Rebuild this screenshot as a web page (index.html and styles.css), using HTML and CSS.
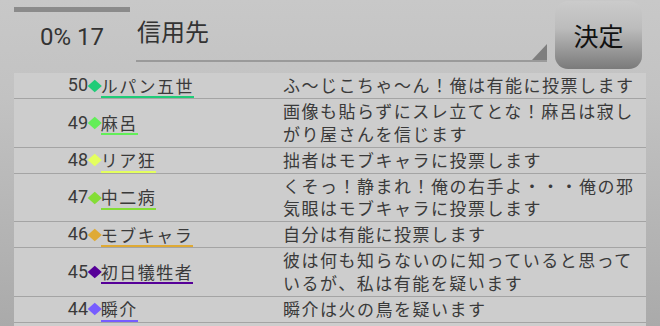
FILE: index.html
```html
<!DOCTYPE html>
<html lang="ja">
<head>
<meta charset="utf-8">
<link rel="stylesheet" href="styles.css">
</head>
<body>
<div class="screen">
  <header class="top">
    <div class="timer">
      <div class="timer-bar"></div>
      <div class="timer-text">0% 17</div>
    </div>
    <div class="spinner">
      <span class="spinner-label">信用先</span>
      <span class="spinner-arrow"></span>
    </div>
    <button class="decide">決定</button>
  </header>
  <ul class="log">
    <li class="row c-teal">
      <span class="no">50</span>
      <span class="gem"></span>
      <span class="name">ルパン五世</span>
      <p class="msg">ふ〜じこちゃ〜ん！俺は有能に投票します</p>
    </li>
    <li class="row c-green">
      <span class="no">49</span>
      <span class="gem"></span>
      <span class="name">麻呂</span>
      <p class="msg">画像も貼らずにスレ立てとな！麻呂は寂しがり屋さんを信じます</p>
    </li>
    <li class="row c-yellow">
      <span class="no">48</span>
      <span class="gem"></span>
      <span class="name">リア狂</span>
      <p class="msg">拙者はモブキャラに投票します</p>
    </li>
    <li class="row c-lime">
      <span class="no">47</span>
      <span class="gem"></span>
      <span class="name">中二病</span>
      <p class="msg">くそっ！静まれ！俺の右手よ・・・俺の邪気眼はモブキャラに投票します</p>
    </li>
    <li class="row c-gold">
      <span class="no">46</span>
      <span class="gem"></span>
      <span class="name">モブキャラ</span>
      <p class="msg">自分は有能に投票します</p>
    </li>
    <li class="row c-purple">
      <span class="no">45</span>
      <span class="gem"></span>
      <span class="name">初日犠牲者</span>
      <p class="msg">彼は何も知らないのに知っていると思っているが、私は有能を疑います</p>
    </li>
    <li class="row c-violet">
      <span class="no">44</span>
      <span class="gem"></span>
      <span class="name">瞬介</span>
      <p class="msg">瞬介は火の鳥を疑います</p>
    </li>
  </ul>
</div>
</body>
</html>
```
FILE: styles.css
```css
html, body {
  margin: 0;
  padding: 0;
}
body {
  width: 660px;
  height: 326px;
  overflow: hidden;
  background: linear-gradient(#c8c8c8, #c2c2c2 30%, #aaaaaa);
  font-family: Roboto, "Noto Sans CJK JP", sans-serif;
  color: #3a3a3a;
}
.screen {
  display: flex;
  flex-direction: column;
  height: 326px;
}
.top {
  display: flex;
  align-items: flex-start;
  height: 73px;
  flex: none;
  padding-left: 14px;
  box-sizing: border-box;
}
.timer {
  width: 116px;
  padding-top: 7px;
}
.timer-bar {
  height: 5px;
  background: #8b8b8b;
}
.timer-text {
  margin-top: 11px;
  text-align: center;
  font-family: Roboto, sans-serif;
  font-size: 24px;
  line-height: 28px;
  color: #333333;
}
.spinner {
  display: flex;
  justify-content: space-between;
  align-items: flex-end;
  width: 411px;
  height: 60px;
  margin-left: 6px;
  border-bottom: 2px solid #9a9a9a;
}
.spinner-label {
  align-self: flex-start;
  margin-top: 16px;
  padding-left: 1px;
  font-family: "Noto Sans CJK JP", sans-serif;
  font-size: 24px;
  line-height: 30px;
  color: #333333;
}
.spinner-arrow {
  width: 0;
  height: 0;
  border-left: 15px solid transparent;
  border-bottom: 16px solid #7e7e7e;
}
.decide {
  margin: 1px 0 0 8px;
  width: 87px;
  height: 68px;
  padding: 0;
  border: none;
  border-radius: 13px;
  background: linear-gradient(#cbcbcb, #bcbcbc 40%, #7a7a7a);
  font-family: "Noto Sans CJK JP", sans-serif;
  font-size: 25px;
  color: #111111;
}
.log {
  list-style: none;
  margin: 0 0 0 14px;
  padding: 0;
  width: 632px;
  flex: 1;
  background: #cdcdcd;
}
.row {
  display: flex;
  align-items: center;
  padding: 1.25px 0;
  border-bottom: 1px solid #a4a4a4;
  font-size: 17px;
  line-height: 22.5px;
}
.no {
  width: 74px;
  flex: none;
  text-align: right;
  font-size: 18px;
}
.gem {
  width: 9.5px;
  height: 9.5px;
  flex: none;
  margin: 0 1.75px 0 1.5px;
  background: var(--c);
  transform: scaleY(0.88) rotate(45deg);
}
.name {
  margin: -1.25px auto -1.25px 0;
  padding: 3.5px 0 2.5px;
  line-height: 17px;
  letter-spacing: 1.5px;
  border-bottom: 2px solid var(--c);
  font-family: "Noto Sans CJK JP", sans-serif;
}
.msg {
  flex: 0 0 363px;
  align-self: flex-start;
  box-sizing: border-box;
  margin: 0;
  padding-right: 8px;
  letter-spacing: 1.5px;
  font-family: "Noto Sans CJK JP", sans-serif;
}
.c-teal { --c: #20cc78; }
.c-green { --c: #62ee58; }
.c-yellow { --c: #e4ff5e; }
.c-lime { --c: #84dd36; }
.c-gold { --c: #dfaa35; }
.c-purple { --c: #560098; }
.c-violet { --c: #775dff; }
```
